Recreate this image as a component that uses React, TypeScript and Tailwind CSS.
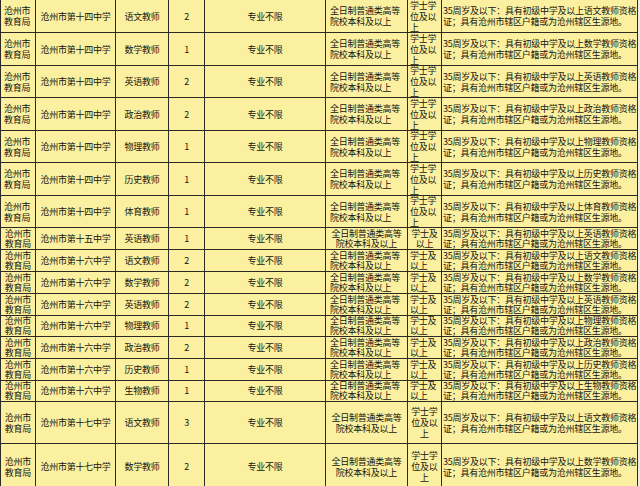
const COLS = "grid grid-cols-[35px_80px_53px_36px_121px_82px_34px_196px]";

type Row = { school: string; post: string; n: number; subj: string };

const groupA: Row[] = [
  { school: "沧州市第十四中学", post: "语文教师", n: 2, subj: "语文" },
  { school: "沧州市第十四中学", post: "数学教师", n: 1, subj: "数学" },
  { school: "沧州市第十四中学", post: "英语教师", n: 2, subj: "英语" },
  { school: "沧州市第十四中学", post: "政治教师", n: 2, subj: "政治" },
  { school: "沧州市第十四中学", post: "物理教师", n: 1, subj: "物理" },
  { school: "沧州市第十四中学", post: "历史教师", n: 1, subj: "历史" },
  { school: "沧州市第十四中学", post: "体育教师", n: 1, subj: "体育" },
];
const heightsA = ["h-[33px]", "h-[33px]", "h-[32px]", "h-[33px]", "h-[32px]", "h-[33px]", "h-[32px]"];

const groupB: Row[] = [{ school: "沧州市第十五中学", post: "英语教师", n: 1, subj: "英语" }];

const groupC: Row[] = [
  { school: "沧州市第十六中学", post: "语文教师", n: 2, subj: "语文" },
  { school: "沧州市第十六中学", post: "数学教师", n: 2, subj: "数学" },
  { school: "沧州市第十六中学", post: "英语教师", n: 2, subj: "英语" },
  { school: "沧州市第十六中学", post: "物理教师", n: 1, subj: "物理" },
  { school: "沧州市第十六中学", post: "政治教师", n: 2, subj: "政治" },
  { school: "沧州市第十六中学", post: "历史教师", n: 1, subj: "历史" },
  { school: "沧州市第十六中学", post: "生物教师", n: 1, subj: "生物" },
];
const heightsC = ["h-[22px]", "h-[22px]", "h-[22px]", "h-[21px]", "h-[22px]", "h-[22px]", "h-[21px]"];

const groupD: Row[] = [
  { school: "沧州市第十七中学", post: "语文教师", n: 3, subj: "语文" },
  { school: "沧州市第十七中学", post: "数学教师", n: 2, subj: "数学" },
];
const heightsD = ["h-[42px]", "h-[46px]"];

type Layout = "A" | "B" | "C" | "D";

const Cell = ({ lines, left, pad }: { lines: string[]; left?: boolean; pad?: string }) => (
  <div
    className={`flex flex-col justify-center overflow-hidden border-r border-[#2c2a22] whitespace-nowrap ${
      left ? `items-start ${pad ?? "pl-[2px]"}` : "items-center"
    }`}
  >
    {lines.map((l) => (
      <span key={l}>{l}</span>
    ))}
  </div>
);

const TableRow = ({ row, layout, height }: { row: Row; layout: Layout; height: string }) => {
  const tall = layout === "A" || layout === "D";
  return (
    <div
      className={`${COLS} ${height} ${tall ? "leading-[11px]" : "leading-[10px]"} border-b border-l border-[#2c2a22]`}
    >
      <Cell lines={["沧州市", "教育局"]} left={layout === "A"} pad="pl-[3px]" />
      <Cell lines={[row.school]} />
      <Cell lines={[row.post]} />
      <Cell lines={[String(row.n)]} />
      <Cell lines={["专业不限"]} />
      <Cell
        lines={["全日制普通类高等", "院校本科及以上"]}
        left={layout === "A" || layout === "C"}
        pad="pl-[4px]"
      />
      <Cell
        lines={tall ? ["学士学", "位及以", "上"] : ["学士及", "以上"]}
        left={layout === "A" || layout === "C"}
        pad="pl-[2px]"
      />
      <Cell
        lines={[`35周岁及以下：具有初级中学及以上${row.subj}教师资格`, "证；具有沧州市辖区户籍或为沧州辖区生源地。"]}
        left
        pad="pl-[1px]"
      />
    </div>
  );
};

export default function App() {
  return (
    <div className="w-[640px] h-[486px] overflow-hidden bg-[#ecebe6]">
      <div className="w-[638px] bg-[#fbf0a0] text-[#15140f] text-[9px] tracking-[-0.25px] font-['Noto_Sans_CJK_SC','Liberation_Sans',sans-serif]">
        {groupA.map((r, i) => (
          <TableRow key={"a" + i} row={r} layout="A" height={heightsA[i]} />
        ))}
        {groupB.map((r, i) => (
          <TableRow key={"b" + i} row={r} layout="B" height="h-[22px]" />
        ))}
        {groupC.map((r, i) => (
          <TableRow key={"c" + i} row={r} layout="C" height={heightsC[i]} />
        ))}
        {groupD.map((r, i) => (
          <TableRow key={"d" + i} row={r} layout="D" height={heightsD[i]} />
        ))}
      </div>
    </div>
  );
}
